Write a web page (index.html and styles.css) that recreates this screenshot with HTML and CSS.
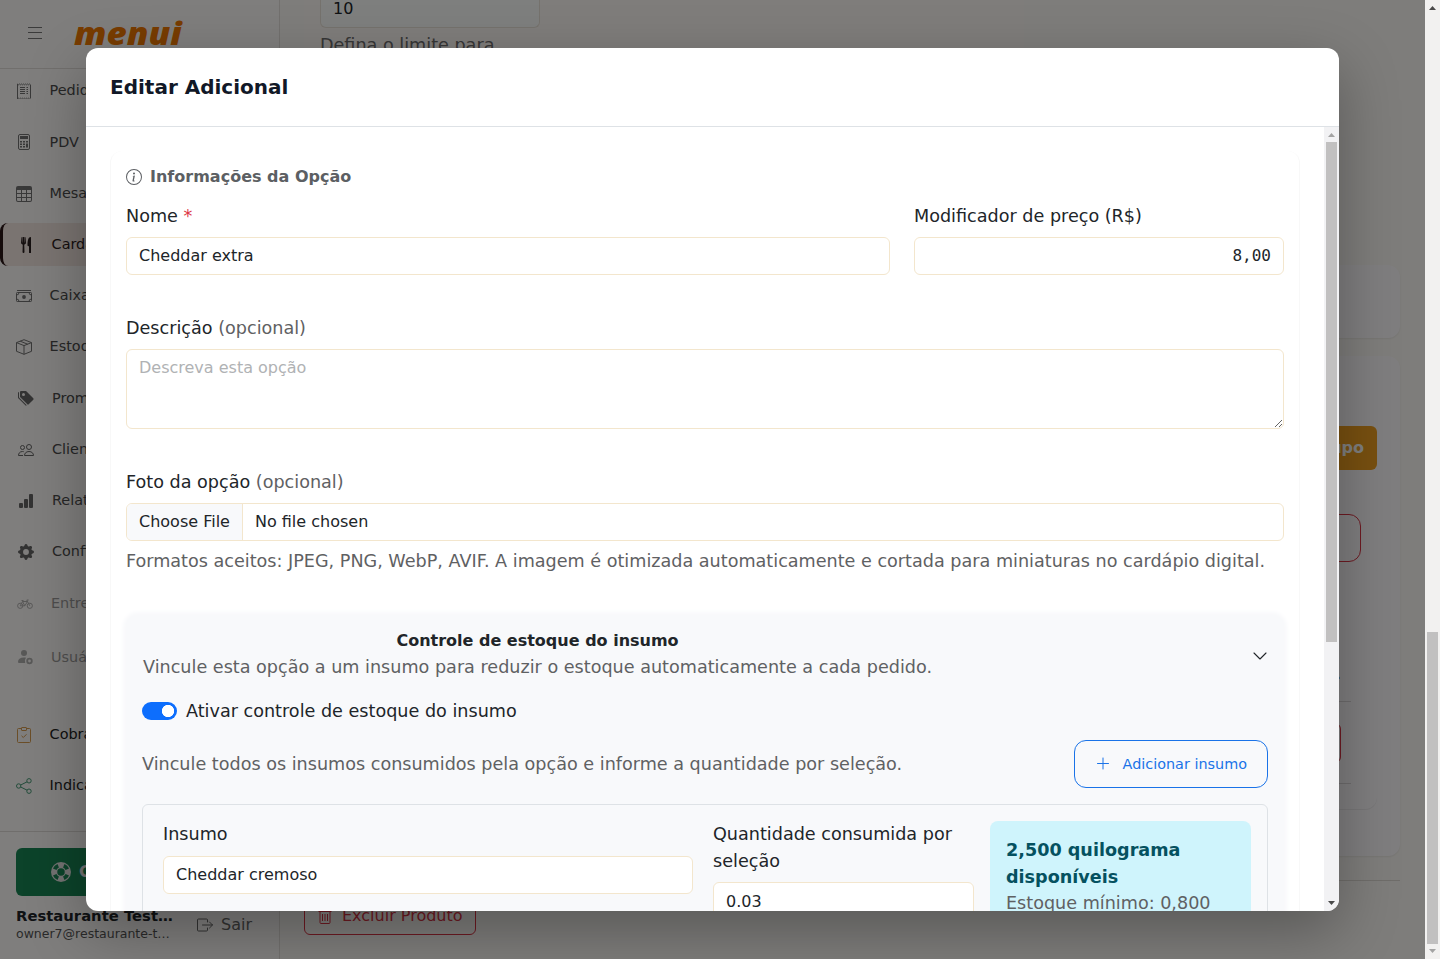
FILE: index.html
```
<!DOCTYPE html>
<html lang="pt-BR">
<head>
    <meta charset="UTF-8">
    <meta name="viewport" content="width=device-width, initial-scale=1.0">
    <title>Editar Adicional - menui</title>
    <link rel="stylesheet" href="styles.css">
</head>
<body>
    <div class="app">
        <aside class="sidebar">
            <div class="sidebar-header">
                <svg class="burger" width="16" height="14" viewBox="0 0 16 14"><path d="M1 1.500h14M1 6.500h14M1 12.500h14" stroke="currentColor" stroke-width="1.200"/></svg>
                <span class="logo">menui</span>
            </div>
            <nav class="menu">
                <a class="menu-item">
                    <svg class="icon" viewBox="0 0 16 16"><path d="M1.500 1l1 .8 1-.8 1 .8 1-.8 1 .8 1-.8 1 .8 1-.8 1 .8 1-.8 1 .8 1-.8 1 .8v13.400l-1 .8-1-.8-1 .8-1-.8-1 .8-1-.8-1 .8-1-.8-1 .8-1-.8-1 .8-1-.8-1 .8z" fill="none" stroke="currentColor"/><path d="M4 4.500h5M4 6.500h5M4 8.500h5M4 10.500h5M10.500 4.500H12M10.500 6.500H12M10.500 8.500H12M10.500 10.500H12" stroke="currentColor"/></svg>
                    Pedidos
                </a>
                <a class="menu-item">
                    <svg class="icon" viewBox="0 0 16 16"><rect x="2.500" y=".5" width="11" height="15" rx="1.500" fill="none" stroke="currentColor"/><path d="M4 2h8v3H4zM4 7h2v1.500H4zM7 7h2v1.500H7zM10 7h2v1.500h-2zM4 9.500h2V11H4zM7 9.500h2V11H7zM4 12h2v1.500H4zM7 12h2v1.500H7zM10 9.500h2v4h-2z" fill="currentColor"/></svg>
                    PDV
                </a>
                <a class="menu-item">
                    <svg class="icon" viewBox="0 0 16 16"><path fill="currentColor" d="M0 2a2 2 0 0 1 2-2h12a2 2 0 0 1 2 2v12a2 2 0 0 1-2 2H2a2 2 0 0 1-2-2zm15 2h-4v3h4zm0 4h-4v3h4zm0 4h-4v3h3a1 1 0 0 0 1-1zm-5 3v-3H6v3zm-5 0v-3H1v2a1 1 0 0 0 1 1zm-4-4h4V8H1zm0-4h4V4H1zm5-3v3h4V4zm4 4H6v3h4z"/></svg>
                    Mesas
                </a>
                <a class="menu-item active">
                    <svg class="icon" viewBox="0 0 16 16"><path fill="currentColor" d="M13 .5c0-.276-.226-.506-.498-.465-1.703.257-2.940 2.012-3 8.462a.5.500 0 0 0 .498.500c.56.010 1 .13 1 1.003v5.500a.5.500 0 0 0 .5.500h1a.5.500 0 0 0 .5-.5zM4.250 0a.25.250 0 0 1 .25.250v5.122a.128.128 0 0 0 .256.006l.233-5.140A.25.250 0 0 1 5.240 0h.522a.25.250 0 0 1 .25.238l.233 5.140a.128.128 0 0 0 .256-.006V.250A.25.250 0 0 1 6.750 0h.29a.5.500 0 0 1 .498.458l.423 5.070a1.690 1.690 0 0 1-1.059 1.711l-.053.022a.92.920 0 0 0-.58.884L6.470 15a.971.971 0 1 1-1.942 0l.202-6.855a.92.920 0 0 0-.58-.884l-.053-.022a1.690 1.690 0 0 1-1.059-1.712L3.462.458A.5.500 0 0 1 3.960 0z"/></svg>
                    Cardápio
                </a>
                <a class="menu-item">
                    <svg class="icon" viewBox="0 0 16 16"><path d="M1 2.500h14" stroke="currentColor"/><rect x=".5" y="4.500" width="15" height="9" rx=".8" fill="none" stroke="currentColor"/><path d="M.5 7A2.500 2.500 0 0 0 3 4.500M13 4.500A2.500 2.500 0 0 0 15.500 7M.5 11A2.500 2.500 0 0 1 3 13.500M13 13.500A2.500 2.500 0 0 1 15.500 11" fill="none" stroke="currentColor"/><circle cx="8" cy="9" r="1.900" fill="currentColor"/></svg>
                    Caixa
                </a>
                <a class="menu-item">
                    <svg class="icon" viewBox="0 0 16 16"><path d="M8 .7L15.500 3.600v8.700L8 15.300.5 12.300V3.600zM.5 3.600L8 6.600l7.500-3M8 6.600v8.700M4.200 2.200l7.500 3" fill="none" stroke="currentColor" stroke-linejoin="round"/></svg>
                    Estoque
                </a>
                <a class="menu-item indent">
                    <svg class="icon" viewBox="0 0 16 16"><path fill="currentColor" d="M2 2a1 1 0 0 1 1-1h4.586a1 1 0 0 1 .707.293l7 7a1 1 0 0 1 0 1.414l-4.586 4.586a1 1 0 0 1-1.414 0l-7-7A1 1 0 0 1 2 6.586zm3.500 4a1.500 1.500 0 1 0 0-3 1.500 1.500 0 0 0 0 3"/><path fill="currentColor" d="M1.293 7.793A1 1 0 0 1 1 7.086V2a1 1 0 0 0-1 1v4.586a1 1 0 0 0 .293.707l7 7a1 1 0 0 0 1.414 0l.043-.043z"/></svg>
                    Promoções
                </a>
                <a class="menu-item indent">
                    <svg class="icon" viewBox="0 0 16 16"><g fill="none" stroke="currentColor"><circle cx="11" cy="5" r="2.500"/><circle cx="4.500" cy="5.500" r="2"/><path d="M6.500 13.500c0-2 1.500-4 4.500-4s4.500 2 4.500 4zM5 13.500H.5c0-2 1.200-4 4-4 .5 0 1 .1 1.300.2"/></g></svg>
                    Clientes
                </a>
                <a class="menu-item indent">
                    <svg class="icon" viewBox="0 0 16 16"><path fill="currentColor" d="M1 11a1 1 0 0 1 1-1h2a1 1 0 0 1 1 1v3a1 1 0 0 1-1 1H2a1 1 0 0 1-1-1zm5-4a1 1 0 0 1 1-1h2a1 1 0 0 1 1 1v7a1 1 0 0 1-1 1H7a1 1 0 0 1-1-1zm5-5a1 1 0 0 1 1-1h2a1 1 0 0 1 1 1v12a1 1 0 0 1-1 1h-2a1 1 0 0 1-1-1z"/></svg>
                    Relatórios
                </a>
                <a class="menu-item indent">
                    <svg class="icon" viewBox="0 0 16 16"><path fill="currentColor" d="M9.405 1.050c-.413-1.400-2.397-1.400-2.810 0l-.1.340a1.464 1.464 0 0 1-2.105.872l-.31-.17c-1.283-.698-2.686.705-1.987 1.987l.169.311c.446.820.023 1.841-.872 2.105l-.34.100c-1.400.413-1.400 2.397 0 2.810l.34.100a1.464 1.464 0 0 1 .872 2.105l-.17.310c-.698 1.283.705 2.686 1.987 1.987l.311-.169a1.464 1.464 0 0 1 2.105.872l.1.340c.413 1.400 2.397 1.400 2.810 0l.1-.340a1.464 1.464 0 0 1 2.105-.872l.310.170c1.283.698 2.686-.705 1.987-1.987l-.169-.311a1.464 1.464 0 0 1 .872-2.105l.340-.100c1.400-.413 1.400-2.397 0-2.810l-.340-.100a1.464 1.464 0 0 1-.872-2.105l.170-.310c.698-1.283-.705-2.686-1.987-1.987l-.311.169a1.464 1.464 0 0 1-2.105-.872zM8 10.930a2.929 2.929 0 1 1 0-5.860 2.929 2.929 0 0 1 0 5.858z"/></svg>
                    Configurações
                </a>
                <a class="menu-item disabled">
                    <svg class="icon" viewBox="0 0 16 16"><g fill="none" stroke="currentColor"><circle cx="3.200" cy="9.800" r="2.600"/><circle cx="12.800" cy="9.800" r="2.600"/><path d="M3.200 9.800l2.300-4.300h5l2.300 4.300M5.500 5.500l2.300 4.300 2.700-4.300L9.800 4h1.800M4.500 4.500h2M3.200 9.800h4.600"/></g></svg>
                    Entregadores
                </a>
                <a class="menu-item disabled">
                    <svg class="icon" viewBox="0 0 16 16"><circle cx="7" cy="4" r="3" fill="currentColor"/><path d="M1 13c0-3 2-4.500 6-4.500.8 0 1.500.1 2 .2A5 5 0 0 0 8.200 14H2q-1 0-1-1z" fill="currentColor"/><circle cx="12.500" cy="12" r="2.300" fill="none" stroke="currentColor" stroke-width="1.800"/></svg>
                    Usuários
                </a>
                <a class="menu-item extra">
                    <svg class="icon icon-orange" viewBox="0 0 16 16"><g fill="none" stroke="currentColor"><path d="M5 1.500H2.500a1 1 0 0 0-1 1v12a1 1 0 0 0 1 1h11a1 1 0 0 0 1-1v-12a1 1 0 0 0-1-1H11"/><rect x="5.500" y=".5" width="5" height="3" rx=".5"/><path d="M5.500 8.800l1.800 1.700 3.200-3.200"/></g></svg>
                    Cobranças
                </a>
                <a class="menu-item">
                    <svg class="icon icon-green" viewBox="0 0 16 16"><g fill="none" stroke="currentColor"><circle cx="13" cy="2.800" r="2.200"/><circle cx="2.700" cy="8" r="2.200"/><circle cx="13" cy="13.200" r="2.200"/><path d="M4.700 7l6.400-3.200M4.700 9l6.400 3.200"/></g></svg>
                    Indicações
                </a>
            </nav>
            <div class="sidebar-footer">
                <a class="help-button">
                    <svg width="20" height="20" viewBox="0 0 16 16"><path fill="currentColor" fill-rule="evenodd" d="M8 16A8 8 0 1 0 8 0a8 8 0 0 0 0 16m6.430-5.228a7.030 7.030 0 0 1-3.658 3.658l-1.115-2.788a4 4 0 0 0 1.985-1.985zM5.228 14.430a7.030 7.030 0 0 1-3.658-3.658l2.788-1.115a4 4 0 0 0 1.985 1.985zm9.202-9.202-2.788 1.115a4 4 0 0 0-1.985-1.985l1.115-2.788a7.030 7.030 0 0 1 3.658 3.658m-8.087-.87a4 4 0 0 0-1.985 1.985L1.570 5.228A7.030 7.030 0 0 1 5.228 1.570zM8 11a3 3 0 1 1 0-6 3 3 0 0 1 0 6"/></svg>
                    Central de ajuda
                </a>
                <div class="account">
                    <div class="account-info">
                        <div class="account-name">Restaurante Test…</div>
                        <div class="account-mail">owner7@restaurante-t…</div>
                    </div>
                    <a class="logout">
                        <svg class="icon" viewBox="0 0 16 16"><path d="M10.500 5V3a1 1 0 0 0-1-1h-8a1 1 0 0 0-1 1v10a1 1 0 0 0 1 1h8a1 1 0 0 0 1-1v-2M5.500 8h10M12.500 5l3 3-3 3" fill="none" stroke="currentColor" stroke-linecap="round" stroke-linejoin="round"/></svg>
                        Sair
                    </a>
                </div>
            </div>
        </aside>

        <main class="content">
            <section class="limits">
                <div class="limit-input">10</div>
                <div class="limit-help">Defina o limite para</div>
            </section>
            <section class="card card-small"></section>
            <section class="card card-groups">
                <a class="group-button">Novo Grupo</a>
                <div class="danger-box"></div>
                <div class="group-list">
                    <div class="group-line">.</div>
                    <div class="danger-small"></div>
                    <div class="group-line"></div>
                </div>
            </section>
            <div class="actions">
                <a class="delete-button">
                    <svg class="icon" viewBox="0 0 16 16"><path d="M1.500 3.500h13M5.500 3V1.500h5V3M3 4v10.500a1 1 0 0 0 1 1h8a1 1 0 0 0 1-1V4M5.500 6v7M8 6v7M10.500 6v7" fill="none" stroke="currentColor"/></svg>
                    Excluir Produto
                </a>
            </div>
        </main>

        <div class="backdrop">
            <div class="modal">
                <div class="modal-header">
                    <h5 class="modal-title">Editar Adicional</h5>
                </div>
                <div class="modal-main">
                    <div class="modal-body">
                        <div class="form-section">
                            <h6 class="section-title">
                                <svg class="icon" viewBox="0 0 16 16"><path fill="currentColor" d="M8 15A7 7 0 1 1 8 1a7 7 0 0 1 0 14m0 1A8 8 0 1 0 8 0a8 8 0 0 0 0 16"/><path fill="currentColor" d="m8.930 6.588-2.290.287-.082.380.450.083c.294.070.352.176.288.469l-.738 3.468c-.194.897.105 1.319.808 1.319.545 0 1.178-.252 1.465-.598l.088-.416c-.2.176-.492.246-.686.246-.275 0-.375-.193-.304-.533zM9 4.500a1 1 0 1 1-2 0 1 1 0 0 1 2 0"/></svg>
                                Informações da Opção
                            </h6>
                            <div class="row">
                                <div class="field field-name">
                                    <label class="label">Nome <span class="required">*</span></label>
                                    <input class="control" type="text" value="Cheddar extra">
                                </div>
                                <div class="field field-price">
                                    <label class="label">Modificador de preço (R$)</label>
                                    <input class="control mono" type="text" value="8,00">
                                </div>
                            </div>
                            <div class="field field-block">
                                <label class="label">Descrição <span class="muted">(opcional)</span></label>
                                <textarea class="control area" placeholder="Descreva esta opção"></textarea>
                            </div>
                            <div class="field field-block">
                                <label class="label">Foto da opção <span class="muted">(opcional)</span></label>
                                <div class="control file">
                                    <span class="file-button">Choose File</span>
                                    <span class="file-name">No file chosen</span>
                                </div>
                                <div class="help muted">Formatos aceitos: JPEG, PNG, WebP, AVIF. A imagem é otimizada automaticamente e cortada para miniaturas no cardápio digital.</div>
                            </div>

                            <div class="stock">
                                <div class="stock-header">
                                    <div class="stock-heading">
                                        <div class="stock-title">Controle de estoque do insumo</div>
                                        <div class="muted">Vincule esta opção a um insumo para reduzir o estoque automaticamente a cada pedido.</div>
                                    </div>
                                    <svg class="icon chevron" viewBox="0 0 16 16"><path d="M2 5l6 6 6-6" fill="none" stroke="currentColor" stroke-width="1.100" stroke-linecap="round" stroke-linejoin="round"/></svg>
                                </div>
                                <div class="switch-row">
                                    <span class="switch"></span>
                                    <span>Ativar controle de estoque do insumo</span>
                                </div>
                                <div class="stock-tools">
                                    <span class="muted">Vincule todos os insumos consumidos pela opção e informe a quantidade por seleção.</span>
                                    <a class="add-button">
                                        <svg width="16" height="16" viewBox="0 0 16 16"><path d="M8 2v11M2.500 7.500h11" stroke="currentColor" stroke-linecap="round"/></svg>
                                        Adicionar insumo
                                    </a>
                                </div>
                                <div class="supply">
                                    <div class="field supply-name">
                                        <label class="label">Insumo</label>
                                        <input class="control" type="text" value="Cheddar cremoso">
                                    </div>
                                    <div class="field supply-amount">
                                        <label class="label">Quantidade consumida por seleção</label>
                                        <input class="control" type="text" value="0.03">
                                    </div>
                                    <div class="supply-info">
                                        <strong>2,500 quilograma disponíveis</strong>
                                        <div class="muted">Estoque mínimo: 0,800</div>
                                    </div>
                                </div>
                            </div>
                        </div>
                    </div>
                    <div class="scrollbar modal-scroll">
                        <svg class="arrow arrow-off" viewBox="0 0 7 4"><path d="M0 4L3.500 0 7 4z" fill="currentColor"/></svg>
                        <div class="thumb"></div>
                        <svg class="arrow" viewBox="0 0 7 4"><path d="M0 0l3.500 4L7 0z" fill="currentColor"/></svg>
                    </div>
                </div>
            </div>
        </div>
    </div>
    <div class="scrollbar page-scroll">
        <svg class="arrow" viewBox="0 0 7 4"><path d="M0 4L3.500 0 7 4z" fill="currentColor"/></svg>
        <div class="thumb"></div>
        <svg class="arrow arrow-off" viewBox="0 0 7 4"><path d="M0 0l3.500 4L7 0z" fill="currentColor"/></svg>
    </div>
</body>
</html>
```
FILE: styles.css
```
* {
    box-sizing: border-box;
}
body {
    display: flex;
    height: 959px;
    margin: 0;
    overflow: hidden;
    font-family: "DejaVu Sans", sans-serif;
    font-size: 17.6px;
    line-height: 1.5;
    color: #212529;
    background-color: #fdfbf6;
}
.icon {
    width: 16px;
    height: 16px;
    flex-shrink: 0;
}
.app {
    position: relative;
    display: flex;
    flex: 1;
    min-width: 0;
    overflow: hidden;
}

/* Sidebar */
.sidebar {
    display: flex;
    flex-direction: column;
    width: 280px;
    flex-shrink: 0;
    border-right: 1px solid #e4e0dc;
    background-color: #fffdfb;
}
.sidebar-header {
    display: flex;
    align-items: center;
    gap: 31px;
    height: 69px;
    padding-left: 27px;
    padding-bottom: 2px;
    border-bottom: 1px solid #e2dfdb;
}
.burger {
    color: #777;
}
.logo {
    font-family: "Open Sans", sans-serif;
    font-size: 31px;
    font-weight: 800;
    font-style: italic;
    line-height: 1;
    color: #f07800;
    transform: scaleX(1.13);
    transform-origin: left;
}
.menu {
    display: flex;
    flex-direction: column;
    flex: 1;
    gap: 8px;
    padding-top: 0.7px;
}
.menu-item {
    display: flex;
    align-items: center;
    gap: 18px;
    height: 43.2px;
    padding-left: 15.6px;
    font-size: 14.4px;
    white-space: nowrap;
    color: #4c4c4c;
}
.menu-item .icon {
    color: #727272;
}
.menu-item.indent {
    padding-left: 18px;
}
.menu-item.indent .icon {
    color: #666;
}
.menu-item.active {
    padding-left: 14.6px;
    border-left: 3px solid #2b1616;
    border-radius: 8px;
    background-color: #f5e8e2;
    color: #2b2020;
}
.menu-item.active .icon {
    color: #2b2020;
}
.menu-item.disabled {
    height: 45.2px;
    padding-left: 17px;
    color: #4c4c4c;
    opacity: 0.55;
}
.menu-item.extra {
    margin-top: 25px;
}
.menu-item.extra,
.menu-item.extra + .menu-item {
    color: #222;
}
.menu-item .icon-orange {
    color: #d69c50;
}
.menu-item .icon-green {
    color: #479a76;
}
.sidebar-footer {
    height: 128px;
    padding: 16px;
    border-top: 1px solid #e0dcd8;
}
.help-button {
    display: flex;
    align-items: center;
    gap: 8px;
    height: 48px;
    padding-left: 35px;
    padding-bottom: 1px;
    border-radius: 6px;
    background-color: #198754;
    font-size: 16px;
    font-weight: bold;
    color: #e6e4e4;
}
.account {
    display: flex;
    align-items: center;
    gap: 27px;
    padding-top: 9px;
}
.account-info {
    width: 154px;
    white-space: nowrap;
}
.account-name {
    font-size: 14.8px;
    font-weight: bold;
}
.account-mail {
    margin-top: -2px;
    font-size: 12.5px;
    line-height: 18px;
    color: #555;
}
.logout {
    display: flex;
    align-items: center;
    gap: 8px;
    padding-top: 1px;
    font-size: 16px;
    color: #666;
}

/* Page under the modal */
.content {
    display: flex;
    flex-direction: column;
    flex: 1;
    min-width: 0;
    padding: 0 25px 0 24px;
}
.limits {
    width: 720px;
    height: 249px;
    padding-left: 16px;
    background-color: #fffaf6;
}
.limit-input {
    width: 220px;
    height: 28px;
    padding: 0 12px;
    line-height: 18px;
    border: 1px solid #ebe5da;
    border-top: 0;
    border-radius: 0 0 6px 6px;
    background-color: #fdfffd;
    font-size: 16px;
}
.limit-help {
    margin-top: 4px;
    color: #6c6c6c;
}
.card {
    border-radius: 12px;
    background-color: #fffdff;
    box-shadow: 0 1px 2px rgba(0, 0, 0, 0.07);
}
.card-small {
    height: 73px;
    margin-top: 16px;
}
.card-groups {
    display: flex;
    flex-direction: column;
    align-items: flex-end;
    height: 500px;
    margin-top: 18px;
    padding: 70px 23px 0 0;
}
.group-button {
    height: 44px;
    padding: 0 13px;
    line-height: 44px;
    border-radius: 6px;
    background-color: #f0a020;
    font-size: 16px;
    font-weight: bold;
    color: #fff;
}
.danger-box {
    width: 300px;
    height: 48px;
    margin: 44px 16px 0 0;
    border: 1px solid #dc3545;
    border-radius: 12px;
}
.group-list {
    display: flex;
    flex-direction: column;
    align-items: flex-end;
    width: 400px;
    height: 247px;
    padding: 98px 26px 0 0;
    border-radius: 12px;
    box-shadow: 0 1px 1px rgba(0, 0, 0, 0.07);
}
.group-line {
    width: 100px;
    height: 42px;
    padding-right: 10px;
    text-align: right;
    border-bottom: 1px solid #dcd8da;
}
.danger-small {
    width: 100px;
    height: 40px;
    margin: 21px 10px -21px 0;
    border: 1px solid #dc3545;
    border-radius: 6px;
}
.actions {
    margin-top: 24px;
    padding-top: 16px;
    border-top: 1px solid #dedad5;
}
.delete-button {
    display: inline-flex;
    align-items: center;
    gap: 9px;
    height: 38px;
    padding: 0 12px;
    border: 1px solid #dc3545;
    border-radius: 6px;
    font-size: 16px;
    color: #dc3545;
}

/* Modal */
.backdrop {
    position: absolute;
    inset: 0;
    display: flex;
    align-items: center;
    justify-content: center;
    background-color: rgba(0, 0, 0, 0.5);
}
.modal {
    display: flex;
    flex-direction: column;
    width: 1253px;
    height: 863px;
    border-radius: 12px;
    overflow: hidden;
    background-color: #fff;
    box-shadow: 0 20px 60px rgba(0, 0, 0, 0.3);
}
.modal-header {
    display: flex;
    align-items: center;
    height: 79px;
    flex-shrink: 0;
    padding: 0 24px;
    border-bottom: 1px solid #dee2e6;
}
.modal-title {
    margin: 0;
    font-size: 20px;
    color: #111827;
}
.modal-main {
    display: flex;
    flex: 1;
    min-height: 0;
}
.modal-body {
    flex: 1;
    min-width: 0;
    padding: 24px;
    overflow: hidden;
}
.form-section {
    padding: 14px 15px 24px;
    border: 1px solid #f8f8f8;
    border-top: 0;
    border-radius: 12px;
}
.section-title {
    display: flex;
    align-items: center;
    gap: 8px;
    margin: 0 0 13.6px;
    font-size: 16px;
    line-height: 24px;
    color: #5c5f63;
}
.row {
    display: flex;
    gap: 24px;
}
.field {
    display: flex;
    flex-direction: column;
}
.field-name {
    width: 764px;
}
.field-price {
    flex: 1;
}
.field-block {
    margin-top: 39.6px;
}
.label {
    margin-bottom: 8px;
}
.required {
    color: #dc3545;
}
.muted {
    color: #5f6163;
}
.control {
    width: 100%;
    height: 38px;
    margin: 0;
    padding: 6px 12px;
    border: 1px solid #f3e6cd;
    border-radius: 6px;
    background-color: #fff;
    font-family: "DejaVu Sans", sans-serif;
    font-size: 16px;
    line-height: 24px;
    color: #212529;
}
.mono {
    font-family: "DejaVu Sans Mono", monospace;
    text-align: right;
}
.area {
    height: 80px;
    resize: vertical;
}
.area::placeholder {
    color: #b0b2b4;
}
.file {
    display: flex;
    padding: 0;
    overflow: hidden;
}
.file-button {
    padding: 6px 12px;
    border-right: 1px solid #f3e6cd;
    background-color: #f8f9fb;
}
.file-name {
    padding: 6px 12px;
}
.help {
    margin-top: 7.2px;
    white-space: nowrap;
}

/* Stock control */
.stock {
    margin-top: 40px;
    padding: 14px 16px 24px;
    border-radius: 12px;
    background-color: #f8f9fb;
    box-shadow: 0 0 4px 3px #f8f9fb;
}
.stock-header {
    display: flex;
    align-items: center;
    justify-content: space-between;
    padding: 0 0 0 1px;
}
.stock-title {
    margin-bottom: 1px;
    font-size: 16px;
    font-weight: bold;
    text-align: center;
}
.chevron {
    margin-top: 3px;
}
.switch-row {
    display: flex;
    align-items: center;
    gap: 9px;
    margin-top: 18px;
}
.switch {
    width: 35px;
    height: 18px;
    border-radius: 9px;
    background: radial-gradient(circle at 26px 9px, #fff 5.800px, #0d6efd 6.500px);
}
.stock-tools {
    display: flex;
    align-items: center;
    justify-content: space-between;
    margin-top: 16px;
}
.add-button {
    display: flex;
    align-items: center;
    gap: 12px;
    height: 48px;
    padding: 0 20px;
    border: 1px solid #1a73e8;
    border-radius: 12px;
    font-size: 14.4px;
    color: #1a73e8;
}
.supply {
    display: flex;
    align-items: flex-start;
    margin-top: 16px;
    padding: 16px 16px 24px 20px;
    border: 1px solid #dee2e6;
    border-radius: 6px;
}
.supply-name {
    width: 530px;
}
.supply-amount {
    width: 261px;
    margin-left: 20px;
}
.supply-info {
    flex: 1;
    height: 120px;
    margin-left: 16px;
    padding: 16px;
    border-radius: 8px;
    background-color: #cff4fc;
    color: #055160;
}

/* Scrollbars */
.scrollbar {
    display: flex;
    flex-direction: column;
    align-items: center;
    width: 15px;
    flex-shrink: 0;
    background-color: #f2f1f0;
}
.arrow {
    width: 7px;
    height: 4px;
    flex-shrink: 0;
    color: #4a4a4a;
}
.arrow-off {
    color: #a3a3a3;
}
.thumb {
    width: 11px;
    background-color: #c1c0c0;
}
.page-scroll {
    padding: 6px 0;
}
.page-scroll .thumb {
    height: 312px;
    margin-top: auto;
    margin-bottom: 5px;
}
.modal-scroll {
    padding: 6px 0;
    background-color: #f2f2f4;
}
.modal-scroll .thumb {
    height: 500px;
    margin: 5px 0 auto;
}
```
